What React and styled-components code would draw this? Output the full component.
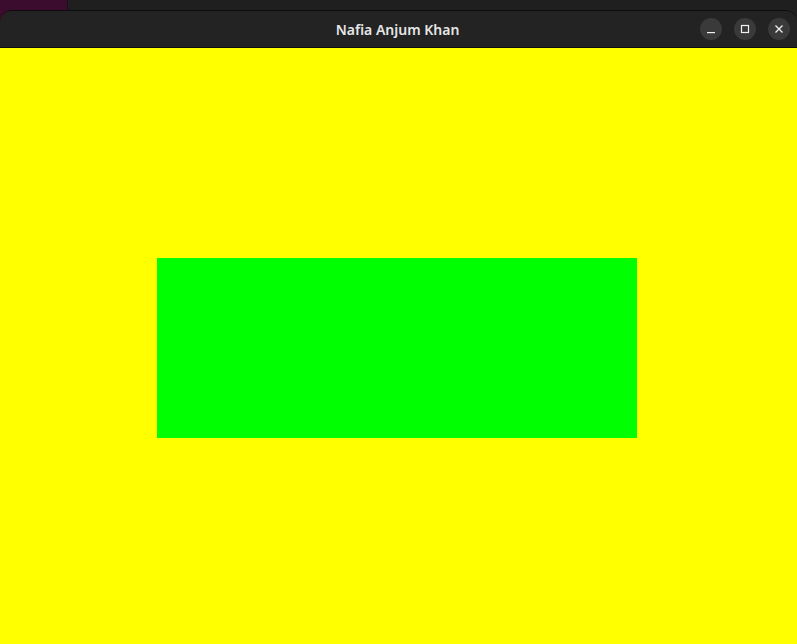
import React from "react";
import styled, { createGlobalStyle } from "styled-components";

const Global = createGlobalStyle`
  html, body {
    margin: 0;
    padding: 0;
    height: 100%;
    overflow: hidden;
  }
  #root {
    height: 100%;
  }
`;

const Desktop = styled.div`
  height: 100vh;
  display: flex;
  flex-direction: column;
  padding-top: 10px;
  box-sizing: border-box;
  background: linear-gradient(
    to right,
    #3b0c2e 0,
    #3b0c2e 67px,
    #141414 67px,
    #141414 68px,
    #1f1f1f 68px
  );
  background-size: 100% 22px;
  background-repeat: no-repeat;
  background-color: #1f1f1f;
`;

const Window = styled.div`
  flex: 1;
  display: flex;
  flex-direction: column;
  border-radius: 12px 12px 0 0;
  overflow: hidden;
  border-top: 1px solid #0c0c0c;
`;

const TitleBar = styled.div`
  height: 36px;
  background: #232323;
  border-bottom: 1px solid #0f0f0f;
  display: flex;
  align-items: center;
  justify-content: center;
  padding-right: 2px;
  position: relative;
`;

const Title = styled.span`
  font-family: "Noto Sans", "DejaVu Sans", sans-serif;
  font-size: 14px;
  font-weight: 600;
  color: #e6e6e6;
`;

const Controls = styled.div`
  position: absolute;
  right: 7px;
  top: 0;
  bottom: 0;
  display: flex;
  align-items: center;
  gap: 12px;
`;

const ControlButton = styled.button`
  width: 22px;
  height: 22px;
  border-radius: 50%;
  border: none;
  padding: 0;
  background: #3a3a3a;
  color: #f0f0f0;
  display: flex;
  align-items: center;
  justify-content: center;
`;

const Content = styled.main`
  flex: 1;
  background: #ffff00;
  display: flex;
  align-items: center;
  justify-content: center;
  padding: 4px 4px 0 0;
`;

const GreenBox = styled.div`
  width: 480px;
  height: 180px;
  background: #00ff00;
`;

const App = () => {
  return (
    <>
      <Global />
      <Desktop>
        <Window>
          <TitleBar>
            <Title>Nafia Anjum Khan</Title>
            <Controls>
              <ControlButton aria-label="minimize">
                <svg width="10" height="10" viewBox="0 0 10 10">
                  <rect x="1" y="8" width="8" height="1.2" fill="currentColor" />
                </svg>
              </ControlButton>
              <ControlButton aria-label="maximize">
                <svg width="10" height="10" viewBox="0 0 10 10">
                  <rect x="1.5" y="1.5" width="7" height="7" fill="none" stroke="currentColor" strokeWidth="1.2" />
                </svg>
              </ControlButton>
              <ControlButton aria-label="close">
                <svg width="10" height="10" viewBox="0 0 10 10">
                  <path d="M1.5 1.5 L8.5 8.5 M8.5 1.5 L1.5 8.5" stroke="currentColor" strokeWidth="1.3" />
                </svg>
              </ControlButton>
            </Controls>
          </TitleBar>
          <Content>
            <GreenBox />
          </Content>
        </Window>
      </Desktop>
    </>
  );
};

export default App;
